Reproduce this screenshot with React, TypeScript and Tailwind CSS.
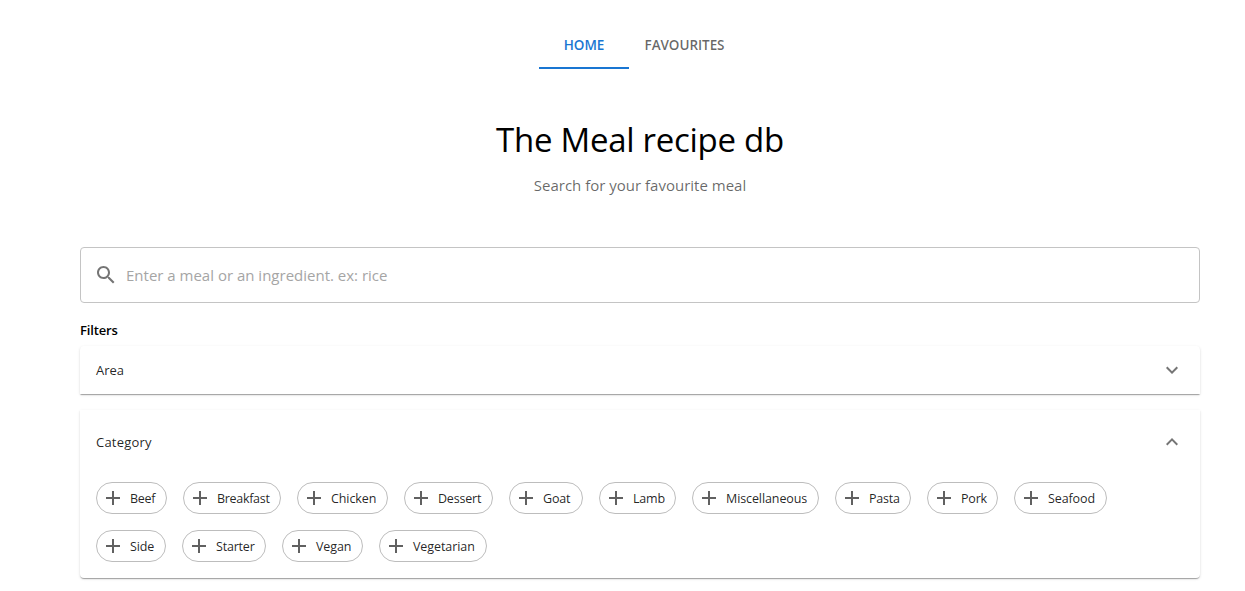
type Chip = { name: string; width: string; tracking: string };

const categories: Chip[] = [
  { name: "Beef", width: "w-[71px]", tracking: "tracking-[-0.3px]" },
  { name: "Breakfast", width: "w-[98px]", tracking: "tracking-[-0.3px]" },
  { name: "Chicken", width: "w-[91px]", tracking: "tracking-[-0.1px]" },
  { name: "Dessert", width: "w-[89px]", tracking: "tracking-[-0.2px]" },
  { name: "Goat", width: "w-[74px]", tracking: "tracking-[-0.2px]" },
  { name: "Lamb", width: "w-[77px]", tracking: "tracking-[-0.2px]" },
  { name: "Miscellaneous", width: "w-[127px]", tracking: "tracking-[-0.1px]" },
  { name: "Pasta", width: "w-[76px]", tracking: "tracking-[-0.2px]" },
  { name: "Pork", width: "w-[71px]", tracking: "tracking-[-0.2px]" },
  { name: "Seafood", width: "w-[93px]", tracking: "tracking-[-0.1px]" },
  { name: "Side", width: "w-[70px]", tracking: "tracking-[-0.1px]" },
  { name: "Starter", width: "w-[84px]", tracking: "tracking-[-0.2px]" },
  { name: "Vegan", width: "w-[81px]", tracking: "tracking-[-0.1px]" },
  { name: "Vegetarian", width: "w-[108px]", tracking: "tracking-[-0.08px]" },
];

function Icon({ d, className }: { d: string; className: string }) {
  return (
    <svg viewBox="0 0 24 24" className={`size-6 shrink-0 ${className}`} fill="currentColor" aria-hidden="true">
      <path d={d} />
    </svg>
  );
}

const SEARCH =
  "M15.5 14h-.79l-.28-.27C15.41 12.59 16 11.11 16 9.5 16 5.91 13.09 3 9.5 3S3 5.91 3 9.5 5.91 16 9.5 16c1.61 0 3.09-.59 4.23-1.57l.27.28v.79l5 4.99L20.49 19l-4.99-5zm-6 0C7.01 14 5 11.99 5 9.5S7.01 5 9.5 5 14 7.01 14 9.5 11.99 14 9.5 14z";
const EXPAND = "M16.59 8.59 12 13.17 7.41 8.59 6 10l6 6 6-6z";
const ADD = "M19 13h-6v6h-2v-6H5v-2h6V5h2v6h6v2z";

const PAPER =
  "bg-white shadow-[0px_2px_1px_-1px_rgba(0,0,0,0.2),0px_1px_1px_0px_rgba(0,0,0,0.14),0px_1px_3px_0px_rgba(0,0,0,0.12)]";

export default function App() {
  return (
    <div className="flex h-[591px] flex-col overflow-hidden bg-white pl-20 pr-[45px] pt-[21px] font-['Open_Sans','Noto_Sans',sans-serif] text-black">
      <div className="w-[1120px]">
        <nav className="flex h-12 pl-[459px] text-[13.5px] font-semibold">
          <button className="flex w-[90px] items-center justify-center border-b-2 border-[#1976d2] pt-[3px] text-[#1976d2]">
            <span className="whitespace-nowrap">HOME</span>
          </button>
          <button className="flex w-[111px] items-center justify-center pt-px tracking-[-0.05px] text-black/60">
            <span className="whitespace-nowrap">FAVOURITES</span>
          </button>
        </nav>

        <header className="flex flex-col items-center pt-[50px]">
          <h1 className="whitespace-nowrap text-[33px] leading-[42px] tracking-[-0.28px]">The Meal recipe db</h1>
          <p className="mt-3 whitespace-nowrap text-[15px] leading-6 text-black/60">Search for your favourite meal</p>
        </header>

        <label className="mt-[50px] flex h-14 items-center rounded border border-[#c4c4c4] pl-[13px]">
          <Icon d={SEARCH} className="text-[#757575]" />
          <input
            className="ml-2 h-6 flex-1 text-[15px] outline-none placeholder:text-[#a5a5a5]"
            placeholder="Enter a meal or an ingredient. ex: rice"
          />
        </label>

        <h2 className="mt-[17px] text-[13px] font-semibold leading-5 tracking-[-0.15px]">Filters</h2>

        <section className={`mt-1.5 flex h-12 items-center justify-between rounded-t px-4 ${PAPER}`}>
          <span className="text-[13px] leading-5 text-black/87">Area</span>
          <Icon d={EXPAND} className="text-[#757575]" />
        </section>

        <section className={`mt-4 h-[168px] rounded-b px-4 ${PAPER}`}>
          <div className="flex h-16 items-center justify-between">
            <span className="text-[13px] leading-5 tracking-[0.2px] text-black/87">Category</span>
            <Icon d={EXPAND} className="rotate-180 text-[#757575]" />
          </div>
          <ul className="flex flex-wrap gap-4 pt-2">
            {categories.map((c) => (
              <li
                key={c.name}
                className={`flex h-8 items-center rounded-full border border-[#bdbdbd] pl-1 text-[12.5px] text-black/87 ${c.width} ${c.tracking}`}
              >
                <Icon d={ADD} className="text-[#616161]" />
                <span className="ml-[5px] whitespace-nowrap pt-0.5">{c.name}</span>
              </li>
            ))}
          </ul>
        </section>
      </div>
    </div>
  );
}
